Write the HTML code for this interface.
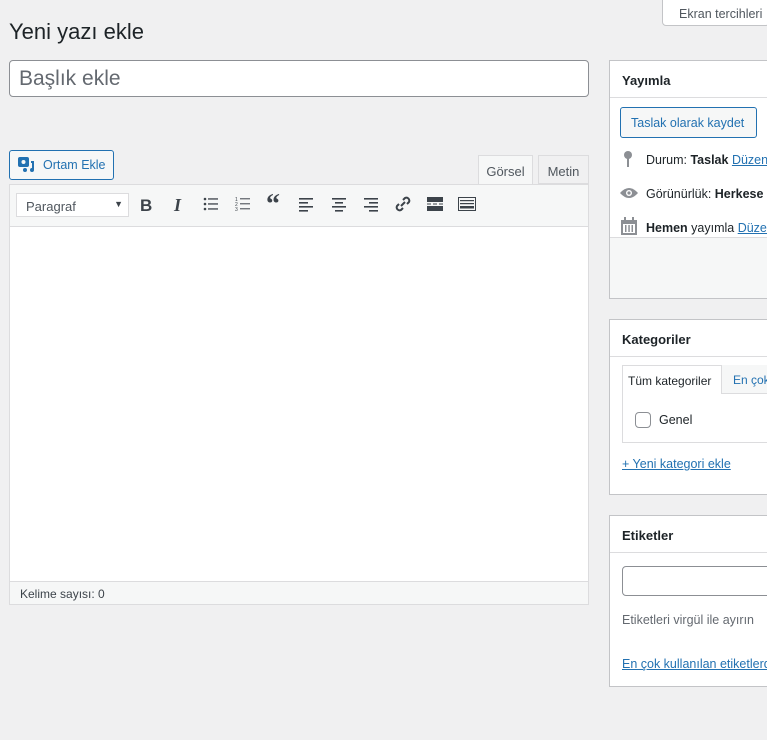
<!DOCTYPE html>
<html><head><meta charset="utf-8"><style>
*{box-sizing:border-box;margin:0;padding:0}
html,body{width:767px;height:740px;overflow:hidden}
body{background:#f0f0f1;font-family:"Liberation Sans",sans-serif;font-size:13px;color:#1d2327;position:relative}
.a{position:absolute;white-space:nowrap}
a{color:#2271b1;text-decoration:underline}
.box{position:absolute;left:609px;width:160px;background:#fff;border:1px solid #c3c4c7;border-right:none;overflow:hidden}
.hd{height:37px;border-bottom:1px solid #dcdcde;padding:12px 12px;font-weight:bold;font-size:13px}
.tb{position:absolute;top:11px;width:16px;height:16px;fill:#3c434a}
</style></head><body>
<div class="a" style="left:662px;top:-1px;width:108px;height:27px;background:#fff;border:1px solid #c3c4c7;border-radius:0 0 4px 4px;padding:7px 0 0 16px;color:#50575e;font-size:12.5px">Ekran tercihleri</div>
<div class="a" style="left:9px;top:19px;font-size:22px;color:#1d2327">Yeni yazı ekle</div>
<div class="a" style="left:9px;top:60px;width:580px;height:37px;background:#fff;border:1px solid #8c8f94;border-radius:4px;padding:6px 9px;font-size:21px;color:#646970">Başlık ekle</div>
<div class="a" style="left:9px;top:150px;width:105px;height:30px;background:#f6f7f7;border:1px solid #2271b1;border-radius:3px;color:#2271b1;padding:7px 0 0 33px;font-size:12.5px">Ortam Ekle</div>
<svg class="a" style="left:18px;top:157px" width="18" height="16" viewBox="0 0 18 16"><rect x="0" y="0" width="11" height="10" rx="2" fill="#2271b1"/><circle cx="5.5" cy="5" r="2" fill="#f6f7f7"/><path d="M13 4h3v9a2 2 0 1 1-2-2V6h-1z" fill="#2271b1"/><circle cx="7" cy="13" r="2" fill="#2271b1"/></svg>
<div class="a" style="left:478px;top:155px;width:55px;height:30px;background:#f6f7f7;border:1px solid #dcdcde;border-bottom:none;padding:8px 0;text-align:center;color:#50575e">Görsel</div>
<div class="a" style="left:538px;top:155px;width:51px;height:29px;background:#f0f0f1;border:1px solid #dcdcde;padding:8px 0;text-align:center;color:#50575e">Metin</div>
<div class="a" style="left:9px;top:184px;width:580px;height:421px;background:#fff;border:1px solid #dcdcde">
<div style="height:42px;background:#f6f7f7;border-bottom:1px solid #dcdcde;position:relative">
<div class="a" style="left:6px;top:8px;width:113px;height:24px;background:#fff;border:1px solid #dcdcde;padding:5px 9px;color:#50575e">Paragraf<span style="position:absolute;right:5px;top:5px;font-size:9px;color:#3c434a">▼</span></div>
<div class="a" style="left:130px;top:11px;font-weight:bold;font-size:17px;color:#3c434a">B</div>
<div class="a" style="left:164px;top:10px;font-style:italic;font-weight:bold;font-family:'Liberation Serif',serif;font-size:18px;color:#3c434a">I</div>
<svg class="tb" style="left:193px" viewBox="0 0 16 16"><circle cx="2" cy="3" r="1.3"/><circle cx="2" cy="8" r="1.3"/><circle cx="2" cy="13" r="1.3"/><rect x="5" y="2.3" width="10" height="1.3"/><rect x="5" y="7.3" width="10" height="1.3"/><rect x="5" y="12.3" width="10" height="1.3"/></svg>
<svg class="tb" style="left:225px" viewBox="0 0 16 16"><text x="0" y="5" font-size="5">1</text><text x="0" y="10" font-size="5">2</text><text x="0" y="15" font-size="5">3</text><rect x="5" y="2.3" width="10" height="1"/><rect x="5" y="7.3" width="10" height="1"/><rect x="5" y="12.3" width="10" height="1"/></svg>
<div class="a" style="left:256px;top:6px;font-weight:bold;font-size:28px;font-family:'Liberation Serif',serif;color:#3c434a;line-height:1">“</div>
<svg class="tb" style="left:288px" viewBox="0 0 16 16"><rect x="1" y="2" width="14" height="1.6"/><rect x="1" y="6" width="9" height="1.6"/><rect x="1" y="10" width="14" height="1.6"/><rect x="1" y="14" width="9" height="1.6"/></svg>
<svg class="tb" style="left:321px" viewBox="0 0 16 16"><rect x="1" y="2" width="14" height="1.6"/><rect x="4" y="6" width="8" height="1.6"/><rect x="1" y="10" width="14" height="1.6"/><rect x="4" y="14" width="8" height="1.6"/></svg>
<svg class="tb" style="left:353px" viewBox="0 0 16 16"><rect x="1" y="2" width="14" height="1.6"/><rect x="6" y="6" width="9" height="1.6"/><rect x="1" y="10" width="14" height="1.6"/><rect x="6" y="14" width="9" height="1.6"/></svg>
<svg class="tb" style="left:385px" viewBox="0 0 16 16"><path d="M6 10l4-4M8 4l2-2a3 3 0 0 1 4 4l-2 2M8 12l-2 2a3 3 0 0 1-4-4l2-2" stroke="#3c434a" stroke-width="2" fill="none"/></svg>
<svg class="tb" style="left:417px" viewBox="0 0 16 16"><rect x="0" y="1" width="16" height="5"/><rect x="0" y="7.5" width="4" height="1"/><rect x="6" y="7.5" width="4" height="1"/><rect x="12" y="7.5" width="4" height="1"/><rect x="0" y="10" width="16" height="5"/></svg>
<svg class="tb" style="left:448px;width:18px" viewBox="0 0 18 16"><path d="M0 1h18v14H0z M1 2v12h16V2z" fill-rule="evenodd"/><rect x="2" y="4" width="14" height="1.2"/><rect x="2" y="7" width="14" height="1.2"/><rect x="2" y="10" width="14" height="2.5"/></svg>
</div>
<div class="a" style="left:0;top:396px;width:578px;height:23px;background:#f6f7f7;border-top:1px solid #dcdcde;padding:5px 10px;font-size:12px;color:#3c434a">Kelime sayısı: 0</div>
</div>

<div class="box" style="top:60px;height:239px">
<div class="hd">Yayımla</div>
<div class="a" style="left:10px;top:46px;width:137px;height:31px;border:1px solid #2271b1;border-radius:3px;background:#f6f7f7;color:#2271b1;padding:8px 0 0 10px;font-size:12.5px">Taslak olarak kaydet</div>
<svg class="a" style="left:14px;top:90px" width="8" height="16" viewBox="0 0 8 16"><circle cx="4" cy="4" r="4" fill="#8c8f94"/><rect x="3" y="6" width="2" height="10" fill="#8c8f94"/></svg>
<div class="a" style="left:36px;top:92px;font-size:12.5px">Durum: <b>Taslak</b> <a>Düzenle</a></div>
<svg class="a" style="left:10px;top:126px" width="18" height="12" viewBox="0 0 18 12"><path d="M0 6Q9-4 18 6Q9 16 0 6z" fill="#8c8f94"/><circle cx="9" cy="6" r="3" fill="#fff"/><circle cx="9" cy="6" r="1.6" fill="#8c8f94"/></svg>
<div class="a" style="left:36px;top:126px;font-size:12.5px">Görünürlük: <b>Herkese açık</b></div>
<svg class="a" style="left:11px;top:156px" width="16" height="18" viewBox="0 0 16 18"><path d="M0 3h16v15H0z M2 7v9h12V7z" fill="#8c8f94" fill-rule="evenodd"/><rect x="3" y="0" width="2" height="4" fill="#8c8f94"/><rect x="11" y="0" width="2" height="4" fill="#8c8f94"/><rect x="4" y="8" width="1.5" height="7" fill="#8c8f94"/><rect x="7.3" y="8" width="1.5" height="7" fill="#8c8f94"/><rect x="10.5" y="8" width="1.5" height="7" fill="#8c8f94"/></svg>
<div class="a" style="left:36px;top:160px;font-size:12.5px"><b>Hemen</b> yayımla <a>Düzenle</a></div>
<div class="a" style="left:0;top:176px;width:170px;height:61px;background:#f6f7f7;border-top:1px solid #dcdcde"></div>
</div>

<div class="box" style="top:319px;height:176px">
<div class="hd">Kategoriler</div>
<div class="a" style="left:12px;top:45px;width:170px;height:78px;border:1px solid #dcdcde;background:#fff"></div>
<div class="a" style="left:12px;top:45px;width:100px;height:29px;background:#fff;border:1px solid #dcdcde;border-bottom:none;padding:8px 5px;font-size:12px">Tüm kategoriler</div>
<div class="a" style="left:112px;top:45px;width:70px;height:29px;background:#f6f7f7;border-bottom:1px solid #dcdcde;padding:8px 11px;color:#2271b1;font-size:12px">En çok</div>
<div class="a" style="left:25px;top:92px;width:16px;height:16px;border:1px solid #8c8f94;border-radius:4px;background:#fff"></div>
<div class="a" style="left:49px;top:93px;font-size:12.5px">Genel</div>
<div class="a" style="left:12px;top:137px;font-size:12.5px"><a>+ Yeni kategori ekle</a></div>
</div>

<div class="box" style="top:515px;height:172px">
<div class="hd">Etiketler</div>
<div class="a" style="left:12px;top:50px;width:170px;height:30px;border:1px solid #8c8f94;border-radius:4px"></div>
<div class="a" style="left:12px;top:97px;color:#646970;font-size:12.5px">Etiketleri virgül ile ayırın</div>
<div class="a" style="left:12px;top:141px;font-size:12.5px"><a>En çok kullanılan etiketlerden seçin</a></div>
</div>
</body></html>
